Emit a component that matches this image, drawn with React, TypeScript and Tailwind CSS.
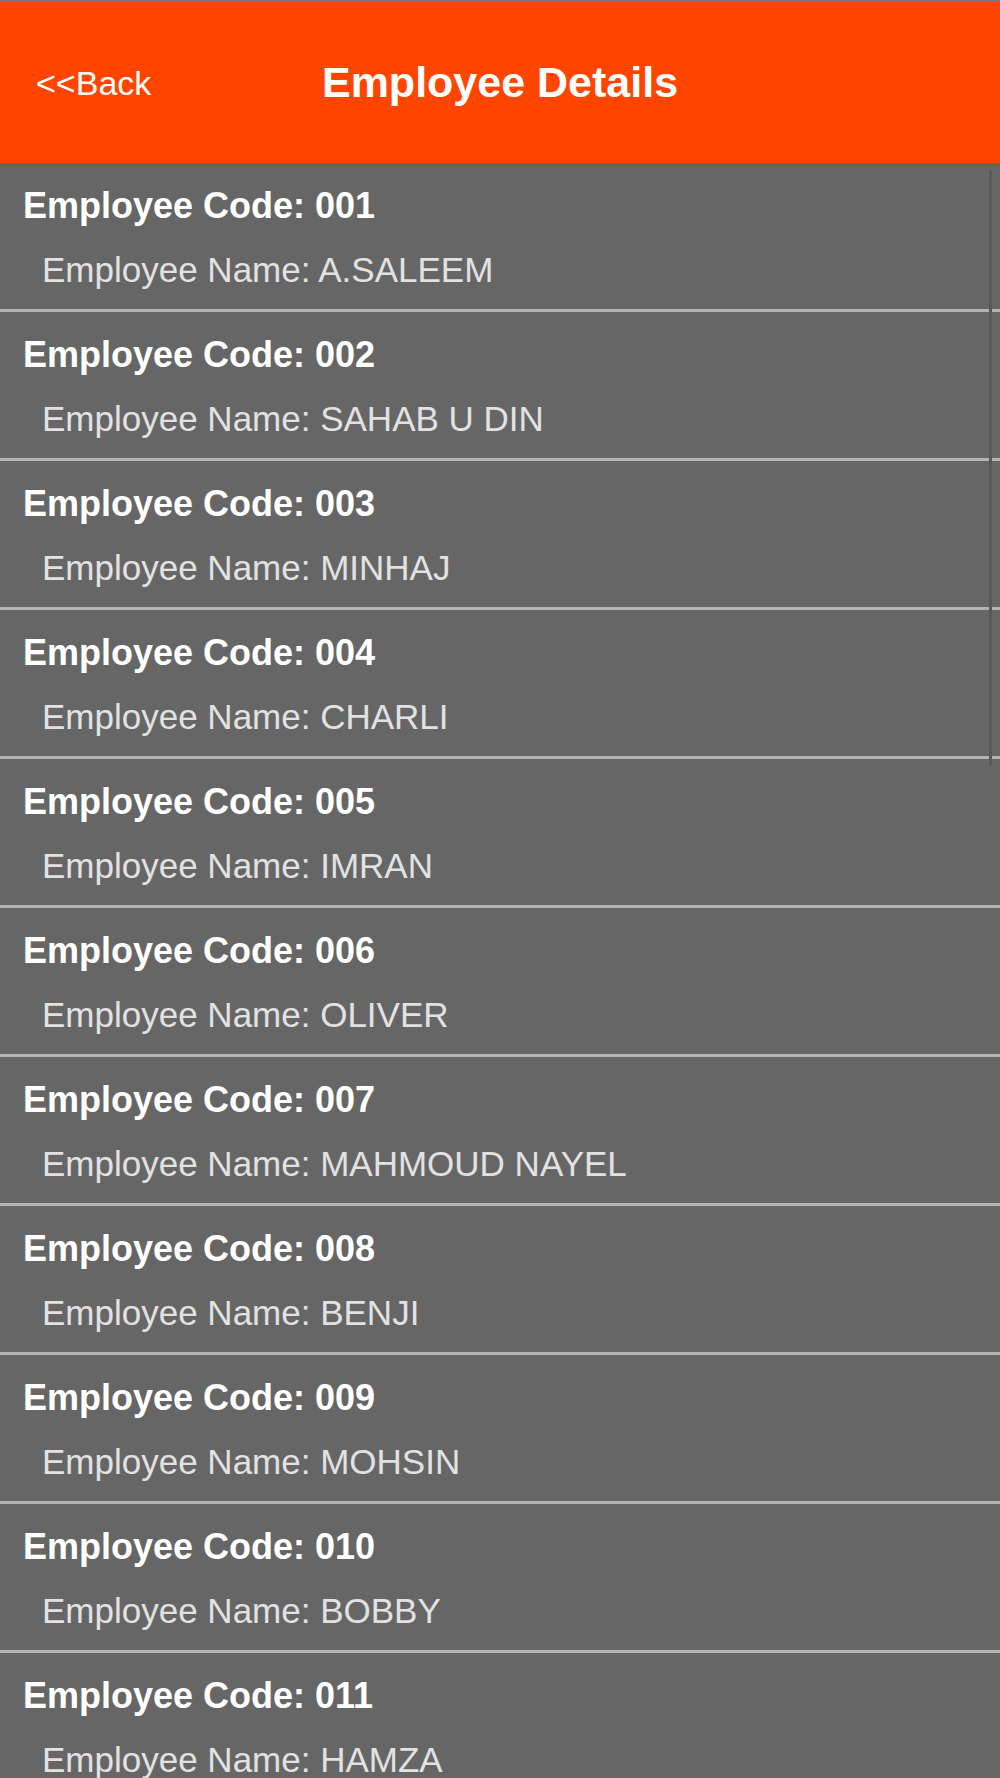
const employees = [
  { code: '001', name: 'A.SALEEM' },
  { code: '002', name: 'SAHAB U DIN' },
  { code: '003', name: 'MINHAJ' },
  { code: '004', name: 'CHARLI' },
  { code: '005', name: 'IMRAN' },
  { code: '006', name: 'OLIVER' },
  { code: '007', name: 'MAHMOUD NAYEL' },
  { code: '008', name: 'BENJI' },
  { code: '009', name: 'MOHSIN' },
  { code: '010', name: 'BOBBY' },
  { code: '011', name: 'HAMZA' },
];

const App = () => {
  return (
    <div
      className="relative w-[1000px] h-[1778px] overflow-hidden bg-[#666666]"
      style={{ fontFamily: '"Liberation Sans", Arial, sans-serif' }}>
      <div className="h-[2px] bg-[#6f7d7e]" />
      <header className="relative flex h-[161px] items-center justify-center bg-[#ff4500]">
        <button className="absolute left-[36px] top-1/2 -translate-y-1/2 text-[34px] text-white">
          &lt;&lt;Back
        </button>
        <h1 className="text-[43px] font-bold text-white">Employee Details</h1>
      </header>

      <ul>
        {employees.map((emp) => (
          <li
            key={emp.code}
            className="h-[149px] border-b-[3px] border-[#b3b3b3] pt-[23px]">
            <p className="pl-[23px] text-[36px] font-bold leading-[40px] text-white">
              Employee Code: {emp.code}
            </p>
            <p className="mt-[24px] pl-[42px] text-[35px] leading-[40px] text-[#e2e2e2]">
              Employee Name: {emp.name}
            </p>
          </li>
        ))}
      </ul>

      {/* scroll indicator */}
      <div className="absolute left-[989px] top-[170px] h-[596px] w-[3px] rounded-full bg-[#585858]" />
    </div>
  );
};

export default App;
